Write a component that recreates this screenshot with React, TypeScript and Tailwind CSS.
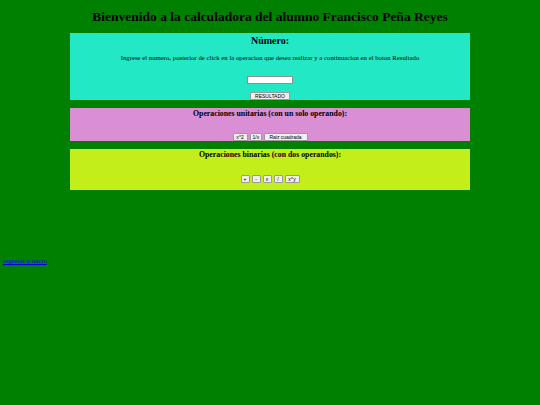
export default function App() {
  const btn =
    "h-[8px] px-[2px] bg-[#efefef] border border-[#9a9a9a] text-[5px] leading-[6px] text-black font-['Liberation_Sans',sans-serif] rounded-[1px]";
  return (
    <div className="w-[540px] h-[405px] bg-[#008000] font-['Liberation_Serif',serif] text-black overflow-hidden">
      <h1 className="pt-[9px] h-[33px] text-center text-[13.5px] leading-[15px] font-bold">
        Bienvenido a la calculadora del alumno Francisco Peña Reyes
      </h1>

      <div className="mx-[70px] flex flex-col gap-[8px]">
        {/* Número */}
        <div className="h-[67px] bg-[#22e8c6] flex flex-col items-center">
          <div className="mt-[2px] text-[10px] leading-[11px] font-bold">Número:</div>
          <p className="mt-[8px] text-[6.75px] leading-[8px]">
            Ingrese el numero, posterior de click en la operacion que desea realizar y a continuacion en el boton Resultado
          </p>
          <input
            type="text"
            className="mt-[14px] w-[46px] h-[8px] bg-white border border-[#8f8f8f]"
          />
          <button className={btn + " mt-[8px] w-[40px]"}>RESULTADO</button>
        </div>

        {/* Unitarias */}
        <div className="h-[33px] bg-[#da8ed4] flex flex-col items-center">
          <div className="mt-[1px] text-[7.8px] leading-[9px] font-bold">
            Operaciones unitarias (con un solo operando):
          </div>
          <div className="mt-[15px] flex gap-[2px]">
            <button className={btn + " w-[15px]"}>x^2</button>
            <button className={btn + " w-[12px]"}>1/x</button>
            <button className={btn + " w-[44px]"}>Raiz cuadrada</button>
          </div>
        </div>

        {/* Binarias */}
        <div className="h-[41px] bg-[#c4ee1a] flex flex-col items-center">
          <div className="mt-[1px] text-[7.8px] leading-[9px] font-bold">
            Operaciones binarias (con dos operandos):
          </div>
          <div className="mt-[16px] flex gap-[2px]">
            <button className={btn + " w-[9px]"}>+</button>
            <button className={btn + " w-[9px]"}>-</button>
            <button className={btn + " w-[9px]"}>x</button>
            <button className={btn + " w-[9px]"}>/</button>
            <button className={btn + " w-[15px]"}>x^y</button>
          </div>
        </div>
      </div>

      <a href="#" className="block mt-[67px] ml-[3px] w-fit text-[6.8px] leading-[8px] text-[#0000ee] underline">
        regresar a inicio
      </a>
    </div>
  );
}
